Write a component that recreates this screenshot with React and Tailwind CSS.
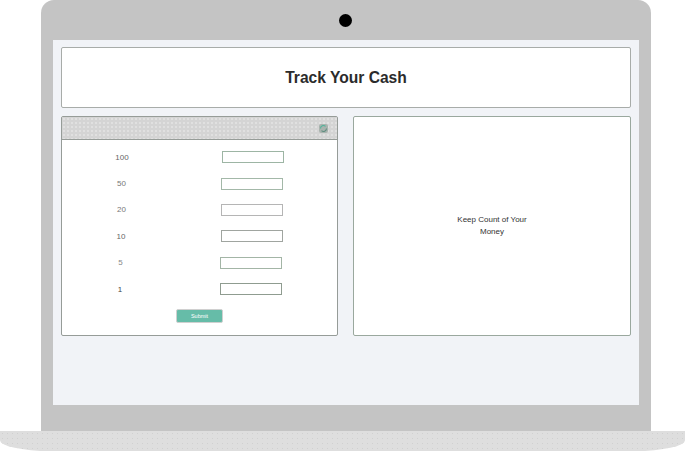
const HEADER_DOTS = 'bg-[radial-gradient(circle,#e0e0e0_0.8px,transparent_1px)] bg-[size:4px_4px]';
const BASE_DOTS = 'bg-[radial-gradient(circle,#d0d0d0_0.7px,transparent_1px)] bg-[size:5px_5px]';

const ROWS = [
  { label: '100', input: 'ml-[40px] border-[#9db5a4]', text: 'text-[#666]' },
  { label: '50', input: 'ml-[39px] border-[#a3b8a8]', text: 'text-[#777] pr-[1px]' },
  { label: '20', input: 'ml-[39px] border-[#b5b5b5]', text: 'text-[#777] pr-[1px]' },
  { label: '10', input: 'ml-[39px] border-[#a0a5a0]', text: 'text-[#666] pr-[2px]' },
  { label: '5', input: 'ml-[38px] border-[#a3b5a6]', text: 'text-[#888] pr-[3px]' },
  { label: '1', input: 'ml-[38px] border-[#8f9c90]', text: 'text-[#444] pr-[4px]' },
];

function RefreshIcon() {
  return (
    <svg width="9" height="9" viewBox="0 0 9 9" className="mr-[9px]">
      <rect x="0" y="0" width="9" height="9" rx="2" fill="#a9b3ae" />
      <path d="M1.5 4.5a3 3 0 0 1 5-2.2" fill="none" stroke="#4fb39a" strokeWidth="1.1" />
      <path d="M7.5 4.5a3 3 0 0 1-5 2.2" fill="none" stroke="#5f8f80" strokeWidth="1.1" />
    </svg>
  );
}

export default function App() {
  return (
    <div className="w-[685px] h-[451px] bg-white overflow-hidden font-['Liberation_Sans',Arial,sans-serif]">
      <div className="ml-[41px] w-[610px] h-[431px] bg-[#c4c4c4] rounded-t-[13px] flex flex-col px-[12px]">
        <div className="h-[40px] shrink-0 flex items-center justify-center pr-[2px]">
          <div className="w-[13px] h-[13px] rounded-full bg-black" />
        </div>
        <div className="w-[586px] h-[365px] bg-[#f1f3f7] px-[8px] pt-[7px]">
          <div className="h-[61px] bg-white border border-[#a8aca9] rounded-[2px] flex items-center justify-center pt-[1px]">
            <h1 className="text-[15.6px] font-bold text-[#2b2b2b]">Track Your Cash</h1>
          </div>
          <div className="flex gap-[15px] mt-[8px] h-[220px]">
            <div className="w-[277px] bg-white border border-[#969c98] rounded-[2px] flex flex-col">
              <div className={`h-[23px] shrink-0 bg-[#d4d4d4] border-b border-[#969c98] flex items-center justify-end ${HEADER_DOTS}`}>
                <RefreshIcon />
              </div>
              <div className="pt-[4px]">
                {ROWS.map(row => (
                  <div key={row.label} className="h-[26.4px] flex items-center">
                    <span className={`w-[120px] text-center text-[8px] pt-[1px] ${row.text}`}>{row.label}</span>
                    <input className={`w-[62px] h-[12px] border bg-white outline-none ${row.input}`} />
                  </div>
                ))}
                <button className="block mt-[6.4px] ml-[114px] w-[47px] h-[14px] rounded-[2px] bg-[#66bca8] border border-[#d0d0d0] text-white text-[5.5px]">
                  Submit
                </button>
              </div>
            </div>
            <div className="w-[278px] bg-white border border-[#9aa89e] rounded-[2px] flex items-center justify-center">
              <p className="w-[80px] text-center text-[8px] leading-[12px] text-[#333]">Keep Count of Your Money</p>
            </div>
          </div>
        </div>
      </div>
      <div className={`h-[20px] bg-[#dedede] rounded-bl-[50px_11px] rounded-br-[50px_11px] ${BASE_DOTS}`} />
    </div>
  );
}
